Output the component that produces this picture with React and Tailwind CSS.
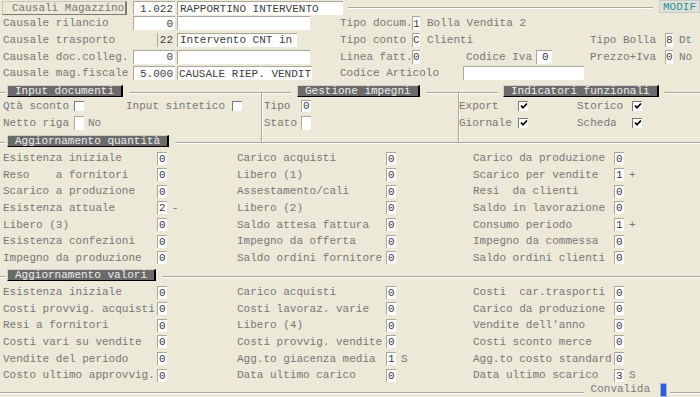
import React from "react";

const Inp = ({ cls = "", children }) => (
  <div className={`flex items-center bg-white border-l border-t border-[#aca899] text-[#404040] whitespace-pre ${cls}`}>
    {children}
  </div>
);

const Val = ({ children }) => (
  <div className="w-[10px] h-[13px] bg-white border-l border-t border-[#aca899] text-[#383838] leading-[12px] pl-[1px]">
    {children}
  </div>
);

const Chk = ({ on }) => (
  <span className="w-[10px] h-[10px] bg-white border-l border-t border-[#7a7a7a] flex items-center justify-center">
    {on && (
      <svg width="8" height="8" viewBox="0 0 8 8">
        <path d="M1 3.5 L3 5.8 L7 1.5" stroke="#000" strokeWidth="1.7" fill="none" />
      </svg>
    )}
  </span>
);

const Head = ({ children, wrap = "pl-[2px] pr-[6px]" }) => (
  <span className={`bg-[#ECE9D8] flex ${wrap}`}>
    <span className="h-[12px] leading-[11px] px-[7px] bg-[#6b6b6b] text-[#ededed] border-t border-l border-[#d4d0c8] border-r-2 border-b border-r-black border-b-black whitespace-pre">
      {children}
    </span>
  </span>
);

const Cell = ({ label, v, suf, lw }) => (
  <div className="flex items-center">
    <span className={`whitespace-pre shrink-0 ${lw}`}>{label}</span>
    <Val>{v}</Val>
    {suf && <span className="ml-[5px]">{suf}</span>}
  </div>
);

const qty = [
  [["Esistenza iniziale", "0"], ["Carico acquisti", "0"], ["Carico da produzione", "0"]],
  [["Reso    a fornitori", "0"], ["Libero (1)", "0"], ["Scarico per vendite", "1", "+"]],
  [["Scarico a produzione", "0"], ["Assestamento/cali", "0"], ["Resi  da clienti", "0"]],
  [["Esistenza attuale", "2", "-"], ["Libero (2)", "0"], ["Saldo in lavorazione", "0"]],
  [["Libero (3)", "0"], ["Saldo attesa fattura", "0"], ["Consumo periodo", "1", "+"]],
  [["Esistenza confezioni", "0"], ["Impegno da offerta", "0"], ["Impegno da commessa", "0"]],
  [["Impegno da produzione", "0"], ["Saldo ordini fornitore", "0"], ["Saldo ordini clienti", "0"]],
];

const val = [
  [["Esistenza iniziale", "0"], ["Carico acquisti", "0"], ["Costi  car.trasporti", "0"]],
  [["Costi provvig. acquisti", "0"], ["Costi lavoraz. varie", "0"], ["Carico da produzione", "0"]],
  [["Resi a fornitori", "0"], ["Libero (4)", "0"], ["Vendite dell'anno", "0"]],
  [["Costi vari su vendite", "0"], ["Costi provvig. vendite", "0"], ["Costi sconto merce", "0"]],
  [["Vendite del periodo", "0"], ["Agg.to giacenza media", "1", "S"], ["Agg.to costo standard", "0"]],
  [["Costo ultimo approvvig.", "0"], ["Data ultimo carico", "0"], ["Data ultimo scarico", "3", "S"]],
];

const Grid = ({ rows }) => (
  <div className="grid grid-cols-[237px_236px_227px] auto-rows-[16.67px]">
    {rows.map((r, i) => (
      <React.Fragment key={i}>
        <div className="pl-[3px] flex">
          <Cell label={r[0][0]} v={r[0][1]} suf={r[0][2]} lw="w-[154px]" />
        </div>
        <Cell label={r[1][0]} v={r[1][1]} suf={r[1][2]} lw="w-[149px]" />
        <Cell label={r[2][0]} v={r[2][1]} suf={r[2][2]} lw="w-[141px]" />
      </React.Fragment>
    ))}
  </div>
);

export default function App() {
  return (
    <div className="w-[700px] h-[397px] bg-[#ECE9D8] overflow-hidden text-[11px] leading-[14px] text-[#777] font-['Liberation_Mono',monospace]">
      {/* top section */}
      <div className="h-[92px]">
        <div className="h-[15px] flex items-start">
          <div className="ml-[2px] mt-[1px] w-[125px] h-[14px] flex items-center pl-[9px] bg-[#ECE9D8] border-t border-l border-[#c9c6b8] border-r-2 border-b border-r-[#7d7b70] border-b-[#7d7b70] whitespace-pre">
            Causali Magazzino
          </div>
          <Inp cls="ml-[6px] mt-[1px] w-[42px] h-[14px] justify-end pr-[2px]">1.022</Inp>
          <Inp cls="ml-[2px] mt-[1px] w-[166px] h-[14px] pl-[2px]">RAPPORTINO INTERVENTO</Inp>
          <div className="ml-[5px] mr-[6px] mt-[7px] flex-1 h-[2px] border-t border-[#aca899] shadow-[inset_0_1px_0_#fff]" />
          <div className="w-[41px] h-[13px] leading-[12px] bg-[#dfe2dc] border border-[#c8cbc4] text-[#2f8f8f] flex items-center justify-center">
            MODIF
          </div>
        </div>

        {/* row 2 */}
        <div className="h-[16.67px] flex items-center">
          <div className="w-[340px] flex items-center shrink-0">
            <span className="pl-[3px] w-[133px] whitespace-pre">Causale rilancio</span>
            <Inp cls="w-[42px] h-[14px] justify-end pr-[2px]">0</Inp>
            <Inp cls="ml-[2px] w-[133px] h-[14px]" />
          </div>
          <span className="w-[72px] whitespace-pre">Tipo docum.</span>
          <Inp cls="w-[8px] h-[14px]">1</Inp>
          <span className="ml-[7px] whitespace-pre">Bolla Vendita 2</span>
        </div>

        {/* row 3 */}
        <div className="h-[16.67px] flex items-center">
          <div className="w-[340px] flex items-center shrink-0">
            <span className="pl-[3px] w-[157px] whitespace-pre">Causale trasporto</span>
            <div className="w-[18px] h-[14px] border-l border-[#aca899] text-[#404040] flex items-center justify-end pr-[2px]">22</div>
            <Inp cls="ml-[2px] w-[120px] h-[14px] pl-[2px]">Intervento CNT in</Inp>
          </div>
          <div className="w-[250px] flex items-center shrink-0">
            <span className="w-[72px] whitespace-pre">Tipo conto</span>
            <Inp cls="w-[8px] h-[14px]">C</Inp>
            <span className="ml-[7px] whitespace-pre">Clienti</span>
          </div>
          <span className="w-[75px] whitespace-pre">Tipo Bolla</span>
          <Inp cls="w-[8px] h-[14px]">8</Inp>
          <span className="ml-[6px]">Dt</span>
        </div>

        {/* row 4 */}
        <div className="h-[16.67px] flex items-center">
          <div className="w-[340px] flex items-center shrink-0">
            <span className="pl-[3px] w-[133px] whitespace-pre">Causale doc.colleg.</span>
            <Inp cls="w-[42px] h-[14px] justify-end pr-[2px]">0</Inp>
            <Inp cls="ml-[2px] w-[133px] h-[14px]" />
          </div>
          <div className="w-[126px] flex items-center shrink-0">
            <span className="w-[72px] whitespace-pre">Linea fatt.</span>
            <Inp cls="w-[8px] h-[14px]">0</Inp>
          </div>
          <div className="w-[124px] flex items-center shrink-0">
            <span className="w-[70px] whitespace-pre">Codice Iva</span>
            <Inp cls="w-[16px] h-[14px] pl-[5px]">0</Inp>
          </div>
          <span className="w-[75px] whitespace-pre">Prezzo+Iva</span>
          <Inp cls="w-[8px] h-[14px]">0</Inp>
          <span className="ml-[6px]">No</span>
        </div>

        {/* row 5 */}
        <div className="h-[16.67px] flex items-center">
          <div className="w-[340px] flex items-center shrink-0">
            <span className="pl-[3px] w-[133px] whitespace-pre">Causale mag.fiscale</span>
            <Inp cls="w-[42px] h-[14px] justify-end pr-[2px]">5.000</Inp>
            <Inp cls="ml-[2px] w-[135px] h-[14px] pl-[1px]">CAUSALE RIEP. VENDIT</Inp>
          </div>
          <span className="w-[123px] whitespace-pre">Codice Articolo</span>
          <Inp cls="w-[121px] h-[14px]" />
        </div>
      </div>

      {/* groups */}
      <div className="h-[50px] flex">
        <div className="w-[261px] border-t border-[#aca899] shadow-[inset_0_1px_0_#fff]">
          <div className="-mt-[8px] h-[12px] flex pl-[5px]">
            <Head>Input documenti</Head>
          </div>
          <div className="h-[17px] flex items-center">
            <span className="pl-[3px] w-[74px] whitespace-pre">Qtà sconto</span>
            <Chk />
            <span className="ml-[42px] w-[106px] whitespace-pre">Input sintetico</span>
            <Chk />
          </div>
          <div className="h-[17.5px] flex items-center">
            <span className="pl-[3px] w-[74px] whitespace-pre">Netto riga</span>
            <Inp cls="w-[10px] h-[14px]" />
            <span className="ml-[4px]">No</span>
          </div>
        </div>
        <div className="w-[197px] border-t border-l border-[#aca899] shadow-[inset_1px_1px_0_#fff]">
          <div className="-mt-[8px] h-[12px] flex pl-[29px]">
            <Head wrap="px-[6px]">Gestione impegni</Head>
          </div>
          <div className="h-[17px] flex items-center">
            <span className="pl-[2px] w-[39px] whitespace-pre">Tipo</span>
            <Inp cls="w-[10px] h-[12px] pl-[1px]">0</Inp>
          </div>
          <div className="h-[17.5px] flex items-center">
            <span className="pl-[2px] w-[39px] whitespace-pre">Stato</span>
            <Inp cls="w-[10px] h-[14px]" />
          </div>
        </div>
        <div className="flex-1 border-t border-l border-[#aca899] shadow-[inset_1px_1px_0_#fff]">
          <div className="-mt-[8px] h-[12px] flex pl-[39px]">
            <Head wrap="px-[5px]">Indicatori funzionali</Head>
          </div>
          <div className="h-[17px] flex items-center">
            <span className="w-[59px] whitespace-pre">Export</span>
            <Chk on />
            <span className="ml-[49px] w-[55px] whitespace-pre">Storico</span>
            <Chk on />
          </div>
          <div className="h-[17.5px] flex items-center">
            <span className="w-[59px] whitespace-pre">Giornale</span>
            <Chk on />
            <span className="ml-[49px] w-[55px] whitespace-pre">Scheda</span>
            <Chk on />
          </div>
        </div>
      </div>

      {/* Aggiornamento quantità */}
      <div className="h-[134px] border-t border-[#aca899] shadow-[inset_0_1px_0_#fff]">
        <div className="-mt-[8px] h-[14.7px] flex items-start pl-[5px]">
          <Head>Aggiornamento quantità</Head>
        </div>
        <Grid rows={qty} />
      </div>

      {/* Aggiornamento valori */}
      <div className="h-[107px] border-t border-[#aca899] shadow-[inset_0_1px_0_#fff]">
        <div className="-mt-[8px] h-[14.7px] flex items-start pl-[5px]">
          <Head>Aggiornamento valori</Head>
        </div>
        <Grid rows={val} />
      </div>

      {/* bottom */}
      <div className="h-[14px] flex items-start">
        <div className="mt-[9px] flex-1 h-[2px] border-t border-[#aca899] shadow-[inset_0_1px_0_#fff]" />
        <span className="px-[7px] mt-[-1px]">Convalida</span>
        <div className="ml-[3px] w-[7px] h-[14px] bg-[#2f5fcf] border border-[#9fb4e6]" />
        <div className="ml-[3px] mt-[9px] w-[30px] h-[2px] border-t border-[#aca899] shadow-[inset_0_1px_0_#fff]" />
      </div>
    </div>
  );
}
